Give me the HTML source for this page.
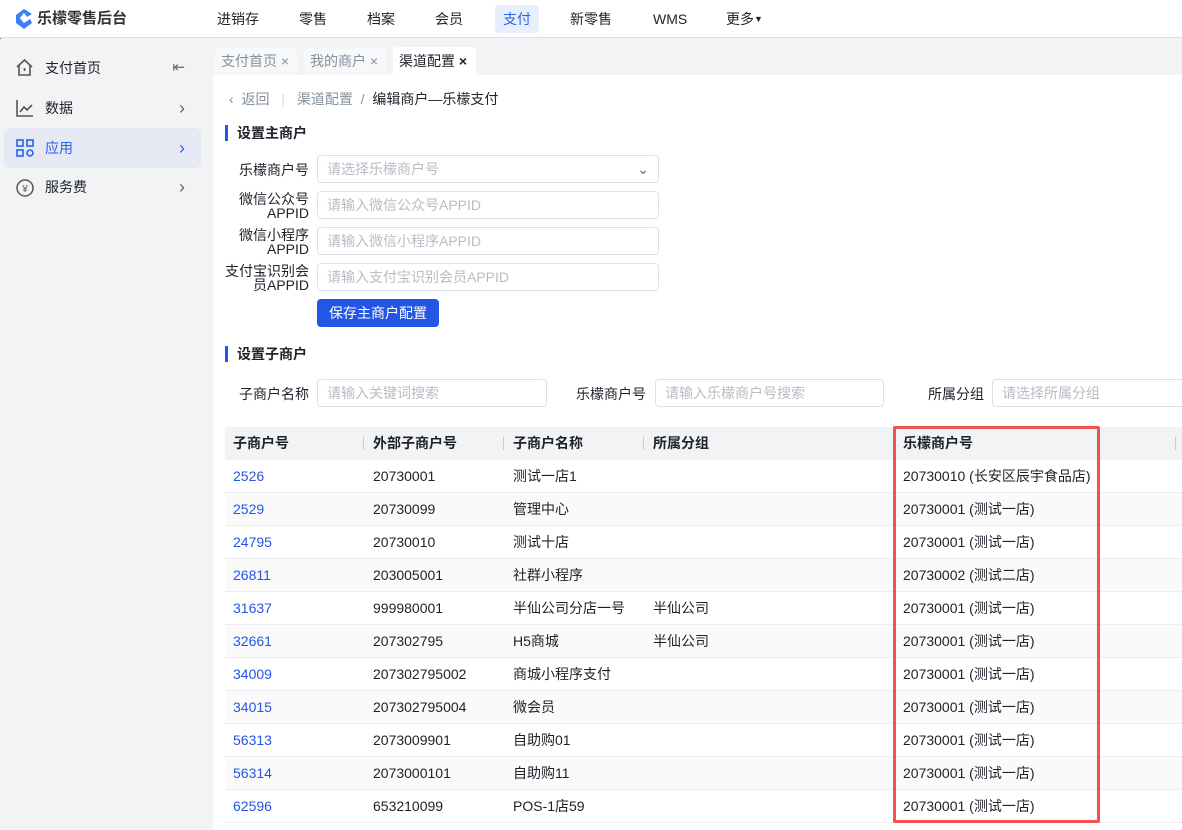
<!DOCTYPE html>
<html><head><meta charset="utf-8"><style>
*{box-sizing:border-box;margin:0;padding:0}
body{width:1182px;height:830px;overflow:hidden;background:#f2f3f5;font-family:"Liberation Sans","Noto Sans CJK SC",sans-serif;font-size:14px;color:#1d2129;position:relative}
.abs{position:absolute}
.top{left:0;top:0;width:1182px;height:38px;background:#fff;border-bottom:1px solid #dcdee2}
.nav{top:0;height:38px;line-height:38px;font-size:14px;color:#1d2129}
.side{left:0;top:39px;width:213px;height:791px;background:#f2f3f5}
.mi{left:4px;width:197px;height:38px;line-height:38px;font-size:14px;padding-left:41px;border-radius:6px}
.chev{right:16px;top:0;color:#666;font-size:18px}
.main{left:213px;top:75px;width:969px;height:755px;background:#fff}
.tab{top:47px;height:28px;line-height:28px;font-size:14px;padding:0 6px;border-radius:4px 4px 0 0;color:#86909c;background:#f7f8fa}
.lbl{font-size:14px;color:#1d2129;text-align:right;line-height:14px}
.inp{height:28px;border:1px solid #dcdfe6;border-radius:4px;background:#fff;color:#b8bcc4;font-size:14px;line-height:26px;padding-left:9px}
.sec{font-weight:bold;font-size:14px;padding-left:9px;border-left:3px solid #2456e6;height:16px;line-height:16px}
.row{left:225px;width:957px;height:33px;line-height:33px;border-bottom:1px solid #ebedf0}
.row span{position:absolute;top:0}
.c1{left:8px}.c2{left:148px}.c3{left:288px}.c4{left:428px}.c5{left:678px}
.row .c1{color:#2456e6}
.hd{font-weight:bold;background:#f2f3f5;border-bottom:none}
.sep{position:absolute;top:10px;width:1px;height:13px;background:#ccc}
</style></head><body>
<div class="abs" style="left:0;top:0;width:1px;height:830px;background:#a0785a"></div>
<div class="abs top"></div>
<svg class="abs" style="left:15px;top:9px" width="18" height="20" viewBox="0 0 18 20"><path d="M9 0L17 5 12 8 9 4 5 9 9 14 15 10 17 14 9 20 1 14V6z" fill="#3b82f6"/><path d="M9 4L12 8 9 14 5 9z" fill="#fff"/></svg>
<div class="abs" style="left:37px;top:0;line-height:38px;font-size:15px;font-weight:bold;color:#333">乐檬零售后台</div>
<div class="abs nav" style="left:217px">进销存</div>
<div class="abs nav" style="left:299px">零售</div>
<div class="abs nav" style="left:367px">档案</div>
<div class="abs nav" style="left:435px">会员</div>
<div class="abs" style="left:495px;top:5px;width:44px;height:28px;background:#e8eefc;border-radius:4px;color:#2563eb;font-size:14px;line-height:28px;text-align:center">支付</div>
<div class="abs nav" style="left:570px">新零售</div>
<div class="abs nav" style="left:653px">WMS</div>
<div class="abs nav" style="left:726px">更多<span style="font-size:9px;vertical-align:2px">▼</span></div>

<div class="abs side"></div>
<div class="abs mi" style="top:49px">支付首页<span class="abs chev" style="font-size:15px">⇤</span></div>
<svg class="abs" style="left:15px;top:58px" width="19" height="19" viewBox="0 0 19 19" fill="none" stroke="#555" stroke-width="1.6"><path d="M2 9L9.5 2 17 9M4 7.5V17H15V7.5M9.5 10V13"/></svg>
<div class="abs mi" style="top:89px">数据<span class="abs chev">›</span></div>
<svg class="abs" style="left:16px;top:99px" width="18" height="18" viewBox="0 0 18 18" fill="none" stroke="#555" stroke-width="1.6"><path d="M1 1V17H17M4 13L8 8 11 11 16 6"/></svg>
<div class="abs mi" style="top:128px;background:#e6e9f3;color:#2563eb;height:40px;line-height:40px">应用<span class="abs chev" style="color:#2563eb">›</span></div>
<svg class="abs" style="left:16px;top:139px" width="18" height="18" viewBox="0 0 18 18" fill="none" stroke="#2563eb" stroke-width="1.6"><rect x="1" y="1" width="6" height="6"/><rect x="11" y="1" width="6" height="6"/><rect x="1" y="11" width="6" height="6"/><circle cx="14" cy="14" r="3"/></svg>
<div class="abs mi" style="top:168px">服务费<span class="abs chev">›</span></div>
<svg class="abs" style="left:16px;top:179px" width="18" height="18" viewBox="0 0 18 18" fill="none" stroke="#555" stroke-width="1.5"><circle cx="9" cy="9" r="8"/><text x="9" y="13" font-size="10" text-anchor="middle" fill="#555" stroke="none">¥</text></svg>

<div class="abs tab" style="left:215px;width:82px">支付首页 ×</div>
<div class="abs tab" style="left:304px;width:83px">我的商户 ×</div>
<div class="abs tab" style="left:393px;width:83px;background:#fff;color:#1d2129">渠道配置 <b>×</b></div>
<div class="abs main"></div>

<div class="abs" style="left:229px;top:90px;line-height:18px;font-size:14px;color:#86909c">‹ &nbsp;返回 <span style="color:#ddd;margin:0 8px">|</span> 渠道配置 &nbsp;/ &nbsp;<span style="color:#1d2129">编辑商户—乐檬支付</span></div>

<div class="abs sec" style="left:225px;top:125px">设置主商户</div>
<div class="abs lbl" style="left:220px;top:163px;width:89px">乐檬商户号</div>
<div class="abs inp" style="left:317px;top:155px;width:342px">请选择乐檬商户号<span style="position:absolute;right:9px;color:#666">⌄</span></div>
<div class="abs lbl" style="left:216px;top:192px;width:93px">微信公众号<br>APPID</div>
<div class="abs inp" style="left:317px;top:191px;width:342px">请输入微信公众号APPID</div>
<div class="abs lbl" style="left:216px;top:228px;width:93px">微信小程序<br>APPID</div>
<div class="abs inp" style="left:317px;top:227px;width:342px">请输入微信小程序APPID</div>
<div class="abs lbl" style="left:216px;top:264px;width:93px">支付宝识别会<br>员APPID</div>
<div class="abs inp" style="left:317px;top:263px;width:342px">请输入支付宝识别会员APPID</div>
<div class="abs" style="left:317px;top:299px;width:122px;height:28px;background:#2456e6;color:#fff;border-radius:4px;line-height:28px;text-align:center;font-size:14px">保存主商户配置</div>

<div class="abs sec" style="left:225px;top:346px">设置子商户</div>
<div class="abs lbl" style="left:239px;top:387px">子商户名称</div>
<div class="abs inp" style="left:317px;top:379px;width:230px">请输入关键词搜索</div>
<div class="abs lbl" style="left:576px;top:387px">乐檬商户号</div>
<div class="abs inp" style="left:655px;top:379px;width:229px">请输入乐檬商户号搜索</div>
<div class="abs lbl" style="left:928px;top:387px">所属分组</div>
<div class="abs inp" style="left:992px;top:379px;width:200px">请选择所属分组</div>

<div class="abs row hd" style="top:427px"><span class="c1" style="color:#1d2129">子商户号</span><i class="sep" style="left:138px"></i><span class="c2">外部子商户号</span><i class="sep" style="left:278px"></i><span class="c3">子商户名称</span><i class="sep" style="left:418px"></i><span class="c4">所属分组</span><span class="c5">乐檬商户号</span><i class="sep" style="left:950px"></i></div>
<div class="abs row" style="top:460px"><span class="c1">2526</span><span class="c2">20730001</span><span class="c3">测试一店1</span><span class="c5">20730010 (长安区辰宇食品店)</span></div>
<div class="abs row" style="top:493px;background:#fafafa"><span class="c1">2529</span><span class="c2">20730099</span><span class="c3">管理中心</span><span class="c5">20730001 (测试一店)</span></div>
<div class="abs row" style="top:526px"><span class="c1">24795</span><span class="c2">20730010</span><span class="c3">测试十店</span><span class="c5">20730001 (测试一店)</span></div>
<div class="abs row" style="top:559px;background:#fafafa"><span class="c1">26811</span><span class="c2">203005001</span><span class="c3">社群小程序</span><span class="c5">20730002 (测试二店)</span></div>
<div class="abs row" style="top:592px"><span class="c1">31637</span><span class="c2">999980001</span><span class="c3">半仙公司分店一号</span><span class="c4">半仙公司</span><span class="c5">20730001 (测试一店)</span></div>
<div class="abs row" style="top:625px;background:#fafafa"><span class="c1">32661</span><span class="c2">207302795</span><span class="c3">H5商城</span><span class="c4">半仙公司</span><span class="c5">20730001 (测试一店)</span></div>
<div class="abs row" style="top:658px"><span class="c1">34009</span><span class="c2">207302795002</span><span class="c3">商城小程序支付</span><span class="c5">20730001 (测试一店)</span></div>
<div class="abs row" style="top:691px;background:#fafafa"><span class="c1">34015</span><span class="c2">207302795004</span><span class="c3">微会员</span><span class="c5">20730001 (测试一店)</span></div>
<div class="abs row" style="top:724px"><span class="c1">56313</span><span class="c2">2073009901</span><span class="c3">自助购01</span><span class="c5">20730001 (测试一店)</span></div>
<div class="abs row" style="top:757px;background:#fafafa"><span class="c1">56314</span><span class="c2">2073000101</span><span class="c3">自助购11</span><span class="c5">20730001 (测试一店)</span></div>
<div class="abs row" style="top:790px"><span class="c1">62596</span><span class="c2">653210099</span><span class="c3">POS-1店59</span><span class="c5">20730001 (测试一店)</span></div>

<div class="abs" style="left:893px;top:426px;width:207px;height:397px;border:3px solid #f05252;border-radius:2px"></div>
</body></html>
